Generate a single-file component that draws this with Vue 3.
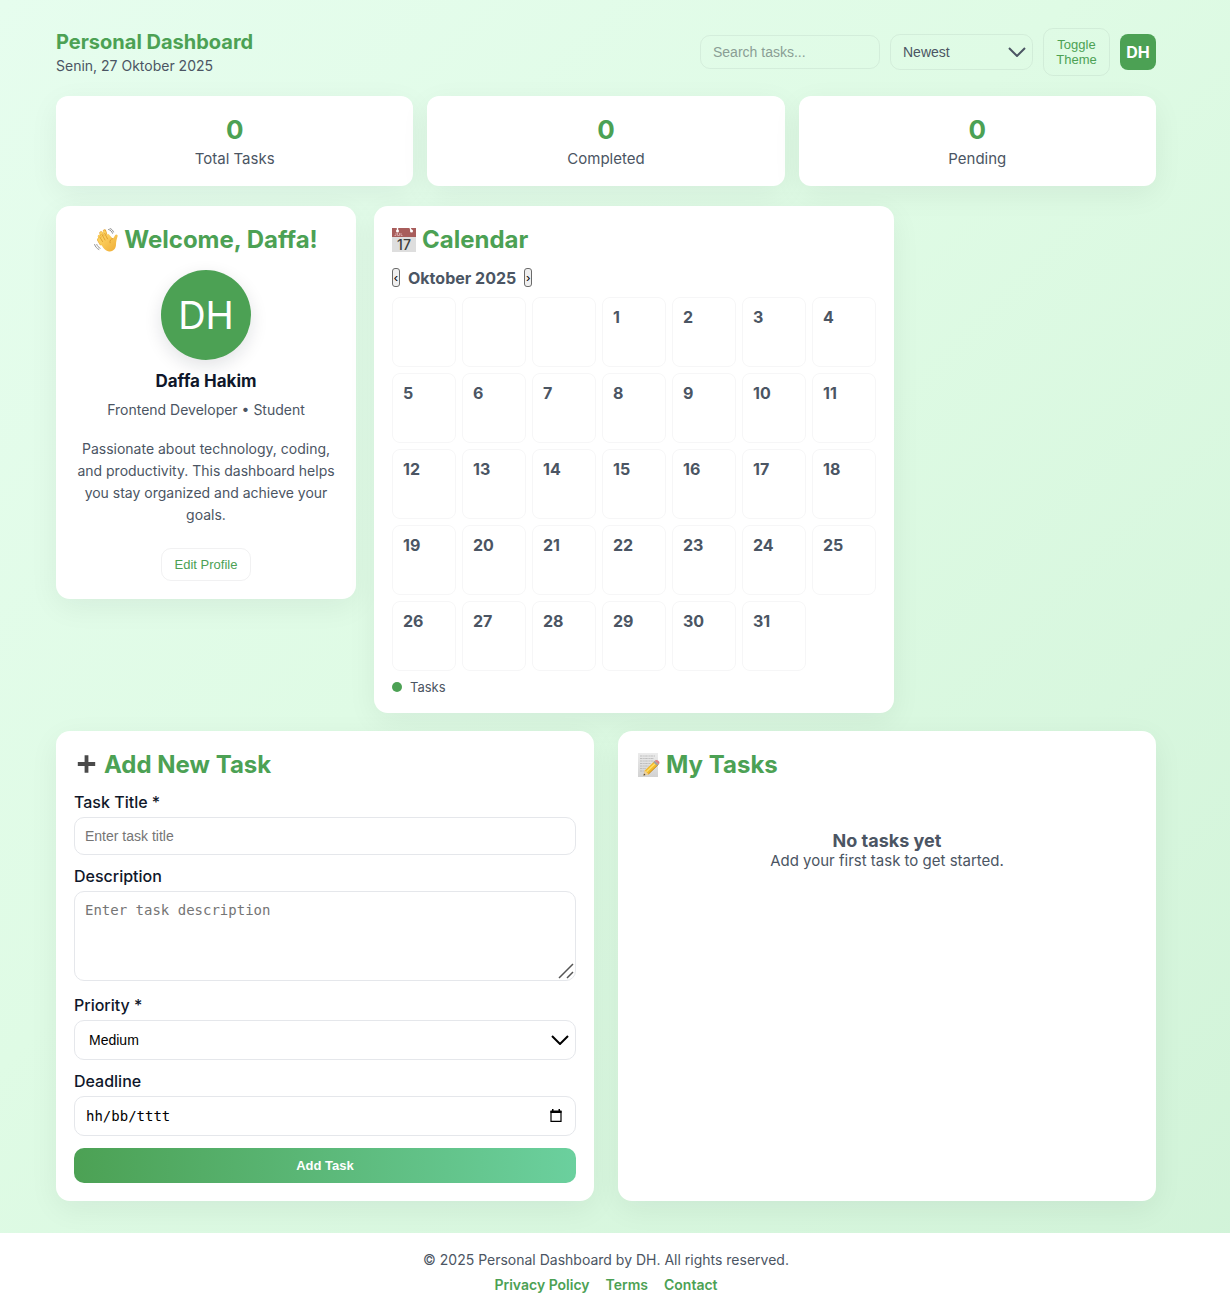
<script setup>
import { ref } from 'vue'

const stats = [
  { value: 0, label: 'Total Tasks' },
  { value: 0, label: 'Completed' },
  { value: 0, label: 'Pending' }
]
const blanks = 3
const days = Array.from({ length: 31 }, (_, i) => i + 1)
const search = ref('')
const sort = ref('newest')
const title = ref('')
const description = ref('')
const priority = ref('medium')
const deadline = ref('')
</script>

<template>
  <div class="page">
    <div class="container">
      <header class="topbar">
        <div class="brand">
          <h1>Personal Dashboard</h1>
          <p>Senin, 27 Oktober 2025</p>
        </div>
        <div class="controls">
          <input v-model="search" class="search" type="search" placeholder="Search tasks..." aria-label="Search tasks" />
          <div class="select-wrap sort">
            <select v-model="sort" aria-label="Sort tasks">
              <option value="newest">Newest</option>
              <option value="oldest">Oldest</option>
            </select>
            <svg class="chevron" viewBox="0 0 18 10" aria-hidden="true"><path d="M1 1l8 8 8-8" /></svg>
          </div>
          <button class="ghost toggle" type="button">Toggle Theme</button>
          <div class="badge">DH</div>
        </div>
      </header>

      <section class="stats">
        <div v-for="s in stats" :key="s.label" class="card stat">
          <strong>{{ s.value }}</strong>
          <span>{{ s.label }}</span>
        </div>
      </section>

      <section class="overview">
        <article class="card profile">
          <h2>
            <svg class="emoji" viewBox="0 0 24 24" aria-hidden="true">
              <defs>
                <linearGradient id="skin" x1="0" y1="0" x2="1" y2="1">
                  <stop offset="0" stop-color="#ffd968" />
                  <stop offset="1" stop-color="#efac36" />
                </linearGradient>
              </defs>
              <path d="M5 15.500L2.700 11.700M6.500 14L3.500 8.500M8.500 12L5 5M11 11L8.500 3" transform="translate(2 0)" stroke="#e5a436" stroke-width="3.400" stroke-linecap="round" />
              <path d="M7 15.500L4.700 11.700M8.500 14L5.200 8.200M10.500 12L7.200 5.200M13 11L10.200 3.500" stroke="#fbd05b" stroke-width="2.600" stroke-linecap="round" />
              <path d="M5.500 13.500C8 18 10.500 22.800 15 23.400c4.600.5 7-3 7-6.800 0-3 .8-5.500 1.600-8.300.4-1.500-1.600-2.400-2.500-1-.9 1.300-1.300 3-2.400 3.300L14.500 6 7 10z" fill="url(#skin)" />
              <path d="M8.500 13.500L5.800 9M11 12L8 6.500M13.500 10.800L10.800 5.500M18.700 10.600c-2 .3-3.200 1.900-2.600 4.200" fill="none" stroke="#d99427" stroke-width=".8" stroke-linecap="round" />
              <path d="M14.500 1.500c2 .5 3.400 1.900 4 3.800M16 .5c1.800.6 3 1.900 3.500 3.500M.6 16.500c.8 2.400 2.200 4 4.300 5M2.800 16.500c.6 1.700 1.700 2.900 3.300 3.700" fill="none" stroke="#929292" stroke-width="1" stroke-linecap="round" />
            </svg>
            <span>Welcome, Daffa!</span>
          </h2>
          <div class="avatar">DH</div>
          <h3>Daffa Hakim</h3>
          <p class="role">Frontend Developer • Student</p>
          <p class="bio">Passionate about technology, coding, and productivity. This dashboard helps you stay organized and achieve your goals.</p>
          <button class="ghost edit" type="button">Edit Profile</button>
        </article>

        <article class="card calendar">
          <h2>
            <svg class="emoji" viewBox="0 0 24 24" aria-hidden="true">
              <rect width="24" height="24" fill="#dedede" />
              <rect width="24" height="9" fill="#a85d5b" />
              <path d="M5.500 0v3M18 0l1.500 3" stroke="#fff" stroke-width="1.400" />
              <circle cx="5.500" cy="3" r="1.500" fill="#fff" />
              <circle cx="19.500" cy="3" r="1.500" fill="#fff" />
              <path d="M4 5v2.500H2.500M5.500 5v2.500h2V5M9 5v2.500h1.500" fill="none" stroke="#dfb5b4" stroke-width=".8" />
              <text x="12" y="22" text-anchor="middle" font-size="14" font-weight="500" fill="#3d3d3d">17</text>
            </svg>
            <span>Calendar</span>
          </h2>
          <div class="month">
            <button type="button" aria-label="Previous month">‹</button>
            <strong>Oktober 2025</strong>
            <button type="button" aria-label="Next month">›</button>
          </div>
          <div class="days">
            <div v-for="b in blanks" :key="'b' + b" class="day"></div>
            <div v-for="d in days" :key="d" class="day">{{ d }}</div>
          </div>
          <div class="legend"><i></i><span>Tasks</span></div>
        </article>
      </section>

      <section class="work">
        <article class="card">
          <h2>
            <svg class="emoji" viewBox="0 0 24 24" aria-hidden="true">
              <path d="M12.500 2.300v17.400M3.800 11h17.400" stroke="#4a4a4a" stroke-width="3.800" />
            </svg>
            <span>Add New Task</span>
          </h2>
          <form @submit.prevent>
            <div class="field">
              <label for="title">Task Title *</label>
              <input id="title" v-model="title" type="text" placeholder="Enter task title" />
            </div>
            <div class="field">
              <label for="description">Description</label>
              <div class="area">
                <textarea id="description" v-model="description" placeholder="Enter task description"></textarea>
                <svg class="grip" viewBox="0 0 16 16" aria-hidden="true"><path d="M1 15L15 1M9 15l6-6" /></svg>
              </div>
            </div>
            <div class="field">
              <label for="priority">Priority *</label>
              <div class="select-wrap priority">
                <select id="priority" v-model="priority">
                  <option value="low">Low</option>
                  <option value="medium">Medium</option>
                  <option value="high">High</option>
                </select>
                <svg class="chevron" viewBox="0 0 18 10" aria-hidden="true"><path d="M1 1l8 8 8-8" /></svg>
              </div>
            </div>
            <div class="field">
              <label for="deadline">Deadline</label>
              <div class="date">
                <input id="deadline" v-model="deadline" type="text" placeholder="hh/bb/tttt" />
                <svg viewBox="0 0 12 13" aria-hidden="true">
                  <path d="M1 2.500h10v9.800H1z" fill="none" stroke="#000" stroke-width="1.200" />
                  <path d="M.5 1.500h11V4H.5zM2 0h1.500v2H2zM8.500 0H10v2H8.500z" />
                </svg>
              </div>
            </div>
            <button class="submit" type="submit">Add Task</button>
          </form>
        </article>

        <article class="card">
          <h2>
            <svg class="emoji" viewBox="0 0 24 24" aria-hidden="true">
              <defs>
                <linearGradient id="paper" x1="0" y1="0" x2="0" y2="1">
                  <stop offset="0" stop-color="#ececec" />
                  <stop offset="1" stop-color="#d2d2d2" />
                </linearGradient>
              </defs>
              <path d="M2 0h20v24H2z" fill="url(#paper)" />
              <path d="M4 3h15M4 5.500h14M4 8h14M4 10.500h11M4 13h9M4 15.500h6M4 18h4" stroke="#b4b4b4" stroke-width=".8" stroke-dasharray="2.500 .7 1.500 .5" />
              <path d="M7.500 22.500l1.300-5L18.500 8l4 3.500-10 9.700z" fill="#f2b92c" />
              <path d="M10.500 18.700L20.300 9.500" stroke="#ffdf67" stroke-width="1.500" />
              <path d="M12.400 21.100l10-9.600" stroke="#b77b18" stroke-width=".8" />
              <path d="M7.500 22.500l1.300-5 3.700 3.700z" fill="#ecd0a2" />
              <path d="M7.500 22.500l.5-2 1.500 1.500z" fill="#333" />
              <path d="M17.300 9.200l1.500-1.400 3.900 3.400-1.500 1.500z" fill="#9ba2a5" />
              <path d="M18.700 7.900l1-.8c1.800-.9 4.500 1.500 3.700 3.300l-.8.8z" fill="#df8285" />
            </svg>
            <span>My Tasks</span>
          </h2>
          <div class="empty">
            <h3>No tasks yet</h3>
            <p>Add your first task to get started.</p>
          </div>
        </article>
      </section>
    </div>

    <footer>
      <p>© 2025 Personal Dashboard by DH. All rights reserved.</p>
      <nav>
        <a href="#privacy">Privacy Policy</a>
        <a href="#terms">Terms</a>
        <a href="#contact">Contact</a>
      </nav>
    </footer>
  </div>
</template>

<style>
body {
  margin: 0;
}
</style>

<style scoped>
* {
  box-sizing: border-box;
}
.page {
  min-height: 100vh;
  display: flex;
  flex-direction: column;
  background: linear-gradient(135deg, #e6fdee 0%, #dffbe5 42%, #d1f3d8 100%);
  color: #4b5563;
  font-family: Inter, "Liberation Sans", sans-serif;
  font-size: 15px;
}
h1, h2, h3, p {
  margin: 0;
}
button, input, select {
  font-family: "Liberation Sans", Arial, sans-serif;
}
.container {
  width: 100%;
  max-width: 1174px;
  margin: 0 auto;
  padding: 28px 46px 32px 28px;
  flex: 1;
}
.topbar {
  display: flex;
  justify-content: space-between;
  align-items: center;
  margin-bottom: 20px;
}
.brand h1 {
  font-size: 20px;
  line-height: 28px;
  color: #4ca154;
}
.brand p {
  font-size: 14px;
  line-height: 20px;
}
.controls {
  display: flex;
  align-items: center;
  gap: 10px;
}
.search {
  width: 180px;
  height: 34px;
  padding: 0 12px;
  appearance: none;
  background: transparent;
  border: 1px solid rgba(15, 23, 42, 0.06);
  border-radius: 10px;
  font-size: 14px;
  color: #4b5563;
}
.search::placeholder {
  color: #8a9e95;
}
.select-wrap {
  position: relative;
}
.select-wrap select {
  width: 100%;
  appearance: none;
  background: transparent;
  border-radius: 10px;
  font-size: 14px;
}
.sort {
  width: 143px;
  color: #4b5563;
}
.sort select {
  height: 36px;
  padding: 0 12px;
  color: inherit;
  border: 1px solid rgba(15, 23, 42, 0.06);
}
.chevron {
  position: absolute;
  right: 7px;
  top: 50%;
  width: 18px;
  height: 10px;
  margin-top: -5px;
  fill: none;
  stroke: currentColor;
  stroke-width: 2;
  pointer-events: none;
}
.ghost {
  background: transparent;
  border: 1px solid rgba(15, 23, 42, 0.06);
  border-radius: 10px;
  color: #4ca154;
  font-size: 13px;
  line-height: 15px;
}
.toggle {
  width: 67px;
  height: 48px;
  padding: 0 10px;
}
.badge {
  width: 36px;
  height: 36px;
  border-radius: 8px;
  background: #4ca154;
  color: #fff;
  font-size: 16px;
  font-weight: 700;
  display: grid;
  place-items: center;
}
.card {
  background: #fff;
  border-radius: 14px;
  padding: 18px;
  box-shadow: 0 8px 30px rgba(15, 23, 42, 0.06);
}
.stats {
  display: grid;
  grid-template-columns: repeat(3, 1fr);
  gap: 14px;
  margin-bottom: 20px;
}
.stat {
  display: flex;
  flex-direction: column;
  align-items: center;
  gap: 2px;
  padding-bottom: 16px;
  border-radius: 12px;
}
.stat strong {
  font-size: 26px;
  line-height: 32px;
  color: #4ca154;
}
.stat span {
  line-height: 22px;
}
.overview {
  display: flex;
  align-items: flex-start;
  gap: 18px;
  margin-bottom: 18px;
}
h2 {
  display: flex;
  align-items: center;
  gap: 6px;
  font-size: 24px;
  line-height: 32px;
  font-weight: 700;
  color: #4ca154;
}
.emoji {
  width: 24px;
  height: 24px;
  flex: none;
}
.profile {
  flex: 0 0 300px;
  display: flex;
  flex-direction: column;
  align-items: center;
  text-align: center;
}
.avatar {
  width: 90px;
  height: 90px;
  margin: 14px 0 10px;
  border-radius: 50%;
  background: #4ca154;
  color: #fff;
  font-size: 38px;
  display: grid;
  place-items: center;
  box-shadow: 0 6px 18px rgba(15, 23, 42, 0.12);
}
.profile h3 {
  font-size: 17px;
  line-height: 22px;
  font-weight: 700;
  color: #0f172a;
}
.role {
  margin: 8px 0 18px;
  font-size: 14px;
  line-height: 20px;
}
.bio {
  font-size: 14px;
  line-height: 22px;
}
.edit {
  width: 90px;
  height: 33px;
  margin-top: 22px;
  padding: 0;
}
.calendar {
  flex: 0 1 520px;
}
.month {
  display: flex;
  align-items: center;
  gap: 8px;
  margin: 12px 0 10px;
  height: 19px;
}
.month strong {
  font-size: 16px;
  font-weight: 700;
}
.month button {
  width: 8px;
  height: 19px;
  padding: 0;
  background: #efefef;
  border: 1px solid #6b6b6b;
  border-radius: 3px;
  font-size: 13px;
  line-height: 15px;
  color: #000;
}
.days {
  display: grid;
  grid-template-columns: repeat(7, 1fr);
  gap: 6px;
}
.day {
  height: 70px;
  padding: 10px;
  border: 1px solid rgba(15, 23, 42, 0.04);
  border-radius: 8px;
  font-size: 16px;
  line-height: 19px;
  font-weight: 700;
}
.legend {
  display: flex;
  align-items: center;
  gap: 8px;
  margin-top: 8px;
  font-size: 13px;
  line-height: 16px;
}
.legend i {
  width: 10px;
  height: 10px;
  border-radius: 50%;
  background: #4ca154;
}
.work {
  display: grid;
  grid-template-columns: 1fr 1fr;
  gap: 24px;
}
form {
  display: flex;
  flex-direction: column;
  gap: 12px;
  margin-top: 12px;
}
.field {
  display: flex;
  flex-direction: column;
  gap: 5px;
}
.field label {
  font-size: 16px;
  line-height: 19px;
  font-weight: 500;
  color: #0f172a;
}
.field input, .field textarea, .field select {
  width: 100%;
  background: #fff;
  border: 1px solid #e5e7eb;
  border-radius: 10px;
  padding: 0 10px;
  font-size: 14px;
  color: #000;
}
.field input {
  height: 38px;
}
.field input::placeholder, .field textarea::placeholder {
  color: #757575;
}
.area {
  position: relative;
  margin-bottom: 3px;
}
.field textarea {
  display: block;
  height: 90px;
  padding: 10px;
  resize: none;
  font-family: "DejaVu Sans Mono", monospace;
  line-height: 17px;
}
.grip {
  position: absolute;
  right: 2px;
  bottom: 2px;
  width: 16px;
  height: 16px;
  stroke: #555;
  stroke-width: 1.5;
}
.priority {
  color: #000;
}
.field select {
  display: block;
  height: 40px;
  padding: 0 14px;
}
.date {
  position: relative;
}
.field .date input {
  display: block;
  height: 40px;
  padding: 0 11px;
  font-family: "DejaVu Sans Mono", monospace;
}
.field .date input::placeholder {
  color: #000;
}
.date svg {
  position: absolute;
  right: 14px;
  top: 13px;
  width: 12px;
  height: 13px;
}
.submit {
  height: 35px;
  border: 0;
  border-radius: 10px;
  background: linear-gradient(90deg, #4ca154, #6bd09e);
  color: #fff;
  font-size: 13px;
  font-weight: 700;
}
.empty {
  margin-top: 48px;
  text-align: center;
}
.empty h3 {
  font-size: 18px;
  line-height: 24px;
  font-weight: 700;
}
.empty p {
  line-height: 16px;
}
footer {
  background: #fff;
  padding: 18px 18px 16px 0;
  text-align: center;
  font-size: 14px;
  line-height: 18px;
}
nav {
  display: flex;
  justify-content: center;
  gap: 16px;
  margin-top: 7px;
}
nav a {
  color: #4ca154;
  font-weight: 600;
  text-decoration: none;
}
</style>
